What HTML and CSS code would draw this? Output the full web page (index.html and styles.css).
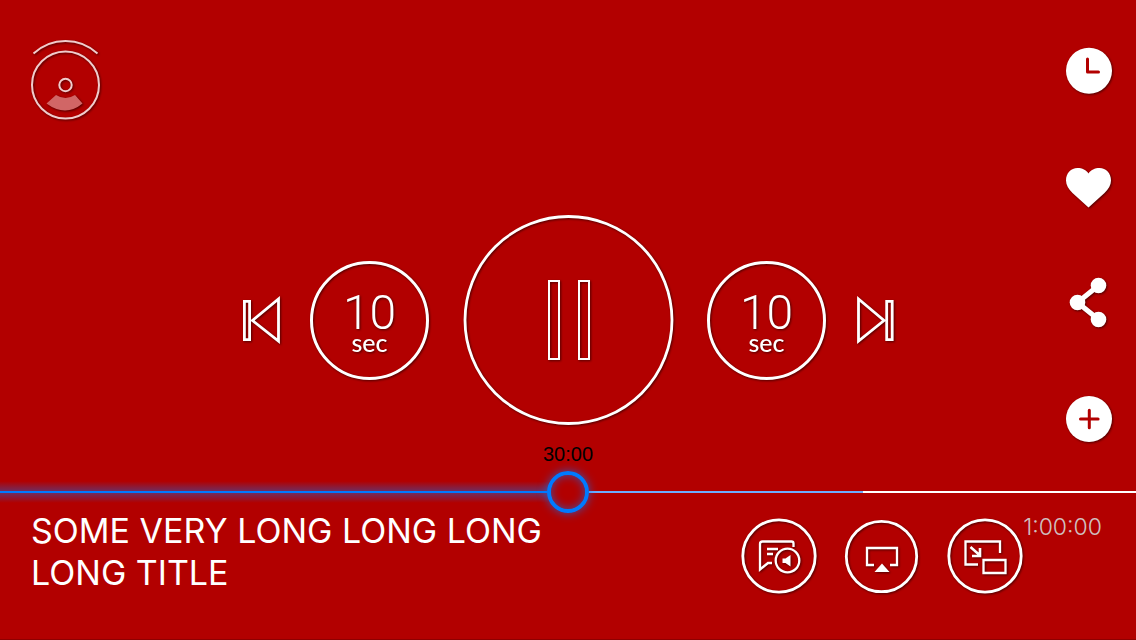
FILE: index.html
```html
<!DOCTYPE html>
<html lang="en">
<head>
<meta charset="utf-8">
<meta name="viewport" content="width=device-width, initial-scale=1">
<title>Player</title>
<link rel="stylesheet" href="styles.css">
</head>
<body>
<main class="player">
  <button class="icon-button disc" type="button" aria-label="Playback menu">
    <svg width="72" height="82" viewBox="0 0 72 82" fill="none" stroke="currentColor" stroke-width="2">
      <path d="M3.500 14.500a47 47 0 0 1 64 0"/>
      <circle cx="35.500" cy="46" r="33.500"/>
      <circle cx="35.500" cy="46" r="6.200"/>
      <path class="disc-wedge" d="M26 56Q35.500 62 45 56L52.500 64.500Q35.500 78.500 16.500 64.500Z" stroke="none" fill="currentColor"/>
    </svg>
  </button>

  <nav class="side-actions" aria-label="Video actions">
    <button class="icon-button" type="button" aria-label="Watch later">
      <svg width="48" height="48" viewBox="0 0 48 48"><circle cx="24" cy="23.700" r="23" fill="currentColor"/><path class="cutout" d="M22.500 12V25H33.500"/></svg>
    </button>
    <button class="icon-button" type="button" aria-label="Favourite">
      <svg width="48" height="48" viewBox="0 0 48 48"><path fill="currentColor" d="M23.500 44.500L7.500 30C3.500 26 1 22 1 17.500C1 10 6 5 12.500 5C17 5 21.500 7 23.500 10.500C25.500 7 30 5 34.500 5C41 5 46 10 46 17.500C46 22 43.500 26 39.500 30Z"/></svg>
    </button>
    <button class="icon-button" type="button" aria-label="Share">
      <svg width="48" height="48" viewBox="0 0 48 48" fill="currentColor"><path d="M33.500 6.500L12.500 23.500L33.500 40.500" fill="none" stroke="currentColor" stroke-width="5"/><circle cx="12.500" cy="23.500" r="7.800"/><circle cx="33.500" cy="6.500" r="7.800"/><circle cx="33.500" cy="40.500" r="7.800"/></svg>
    </button>
    <button class="icon-button" type="button" aria-label="Add to playlist">
      <svg width="48" height="48" viewBox="0 0 48 48"><circle cx="24" cy="24" r="23" fill="currentColor"/><path class="cutout" d="M24.300 15.200V32.800M15.500 24H33.100"/></svg>
    </button>
  </nav>

  <div class="transport">
    <button class="icon-button" type="button" aria-label="Previous">
      <svg width="38" height="48" viewBox="0 0 38 48" fill="none" stroke="currentColor" stroke-width="2.800"><path d="M2.400 5.400H7.600V43.600H2.400ZM36.500 3V45L10.500 24.500Z"/></svg>
    </button>
    <button class="skip" type="button" aria-label="Back 10 seconds"><span class="skip-number">10</span><span class="skip-unit">sec</span></button>
    <button class="icon-button pause" type="button" aria-label="Pause">
      <svg width="210" height="210" viewBox="0 0 210 210" fill="none" stroke="currentColor"><circle cx="105.500" cy="105" r="103.500" stroke-width="2.800"/><path stroke-width="2" d="M86 66H96V144H86ZM116 66H126V144H116Z"/></svg>
    </button>
    <button class="skip" type="button" aria-label="Forward 10 seconds"><span class="skip-number">10</span><span class="skip-unit">sec</span></button>
    <button class="icon-button" type="button" aria-label="Next">
      <svg width="38" height="48" viewBox="0 0 38 48" fill="none" stroke="currentColor" stroke-width="2.800"><path d="M30.700 5.400H36.200V43.600H30.700ZM2.500 3V45L28 24.500Z"/></svg>
    </button>
  </div>

  <section class="bottom">
    <div class="timeline" style="--played:50%;--buffered:76%">
      <label class="elapsed" for="seek">30:00</label>
      <input class="seek" id="seek" type="range" min="0" max="3600" value="1800">
    </div>
    <div class="info">
      <h1 class="title">SOME VERY LONG LONG LONG LONG TITLE</h1>
      <div class="tools">
        <button class="icon-button" type="button" aria-label="Subtitles and audio">
          <svg width="76" height="76" viewBox="0 0 76 76" fill="none" stroke="currentColor" stroke-width="2.300"><circle cx="38" cy="38" r="36.200" stroke-width="2.800"/><path d="M52.500 29V25.500Q52.500 23.500 50.500 23.500H21.500Q19 23.500 19 26V51.500L27 45H31M26 31H37M26 36H32"/><circle cx="46.500" cy="42.500" r="11.800"/><path stroke="none" fill="currentColor" d="M41.500 40.500H44.500L49.500 37V48.500L44.500 45H41.500Z"/></svg>
        </button>
        <button class="icon-button" type="button" aria-label="AirPlay">
          <svg width="76" height="76" viewBox="0 0 76 76" fill="none" stroke="currentColor" stroke-width="2.300"><circle cx="37.500" cy="38.500" r="35.200" stroke-width="2.800"/><path d="M30 47H23V30H53V47H46"/><path fill="currentColor" stroke="none" d="M38 45.500L45.500 54H30.500Z"/></svg>
        </button>
        <button class="icon-button" type="button" aria-label="Picture in picture">
          <svg width="76" height="76" viewBox="0 0 76 76" fill="none" stroke="currentColor" stroke-width="2.300"><circle cx="38" cy="38" r="36.200" stroke-width="2.800"/><path d="M31 46.500H18.500V23.500H53V35M36.500 42H58.500V55H36.500Z"/><path stroke-width="2.600" d="M23.500 29L32.500 37M33 30V38H25"/></svg>
        </button>
      </div>
      <span class="duration">1:00:00</span>
    </div>
  </section>
</main>
</body>
</html>
```
FILE: styles.css
```css
:root {
  --bg: #b20000;
  --blue: #007aff;
  --shadow: drop-shadow(1px 1px 1px rgba(0, 0, 0, .55));
}

* { box-sizing: border-box; }

body {
  margin: 0;
  background: var(--bg);
  color: #fff;
  font-family: Inter, "Liberation Sans", sans-serif;
}

button {
  border: 0;
  padding: 0;
  background: none;
  color: inherit;
  cursor: pointer;
}

/* Every group of controls shares one cell and aligns itself within it. */
.player {
  display: grid;
  grid-template: minmax(100vh, auto) / minmax(0, 1fr);
}

.player > * { grid-area: 1 / 1; }

.icon-button { display: block; filter: var(--shadow); }
.icon-button svg { display: block; overflow: visible; }

.disc {
  place-self: start;
  margin: 39px 30px;
  color: #f0cccc;
}

.disc-wedge { fill: #d16666; }

.side-actions {
  place-self: start end;
  display: flex;
  flex-direction: column;
  gap: 68px;
  padding: 47px 23px 0 0;
  z-index: 1;
}

.cutout {
  fill: none;
  stroke: var(--bg);
  stroke-width: 3;
  stroke-linecap: round;
  stroke-linejoin: round;
}

.transport {
  place-self: center;
  display: flex;
  align-items: center;
  gap: 30px;
  z-index: 1;
}

.pause { margin: 0 4px; }

.skip {
  display: flex;
  flex-direction: column;
  align-items: center;
  justify-content: center;
  width: 119px;
  height: 119px;
  padding-top: 8px;
  border: 3px solid #fff;
  border-radius: 50%;
  font-family: Lato, sans-serif;
  filter: var(--shadow);
}

.skip-number { font: 300 48px/36px Roboto, sans-serif; }
.skip-unit { font-size: 25px; font-weight: 500; line-height: 22px; }

.bottom { align-self: end; border-bottom: 1px solid #8e0000; }

.timeline {
  display: flex;
  flex-direction: column;
}

.elapsed {
  align-self: center;
  margin-bottom: 8px;
  color: #000;
  font: 20px/24px "Liberation Sans", sans-serif;
}

.seek {
  appearance: none;
  display: block;
  width: 100%;
  height: 36px;
  margin: 0;
  background: none;
}

.seek::-webkit-slider-runnable-track {
  height: 36px;
  background:
    linear-gradient(var(--blue), var(--blue)) left center / calc(var(--played) - 20px) 2px no-repeat,
    linear-gradient(transparent 20%, rgba(0, 122, 255, .38) 48%, rgba(0, 122, 255, .38) 52%, transparent 80%) left center / calc(var(--played) - 20px) 100% no-repeat,
    linear-gradient(90deg, transparent calc(var(--played) + 21px), #6eadff calc(var(--played) + 21px) var(--buffered), #fff var(--buffered)) left center / 100% 2px no-repeat;
}

.seek::-webkit-slider-thumb {
  appearance: none;
  width: 42px;
  height: 42px;
  margin-top: -3px;
  border: 4px solid var(--blue);
  border-radius: 50%;
  background: transparent;
  box-shadow: 0 0 10px rgba(0, 122, 255, .7), inset 0 0 10px rgba(0, 122, 255, .6);
}

.info {
  display: flex;
  align-items: flex-start;
  padding: 0 34px 45px 31px;
}

.title {
  max-width: 540px;
  margin: 0;
  font-size: 34px;
  font-weight: 400;
  line-height: 42px;
}

.tools {
  display: flex;
  gap: 27px;
  margin: 8px 0 0 auto;
}

.duration {
  color: #d0c0c0;
  font-size: 23px;
  font-weight: 300;
  line-height: 34px;
}
```
